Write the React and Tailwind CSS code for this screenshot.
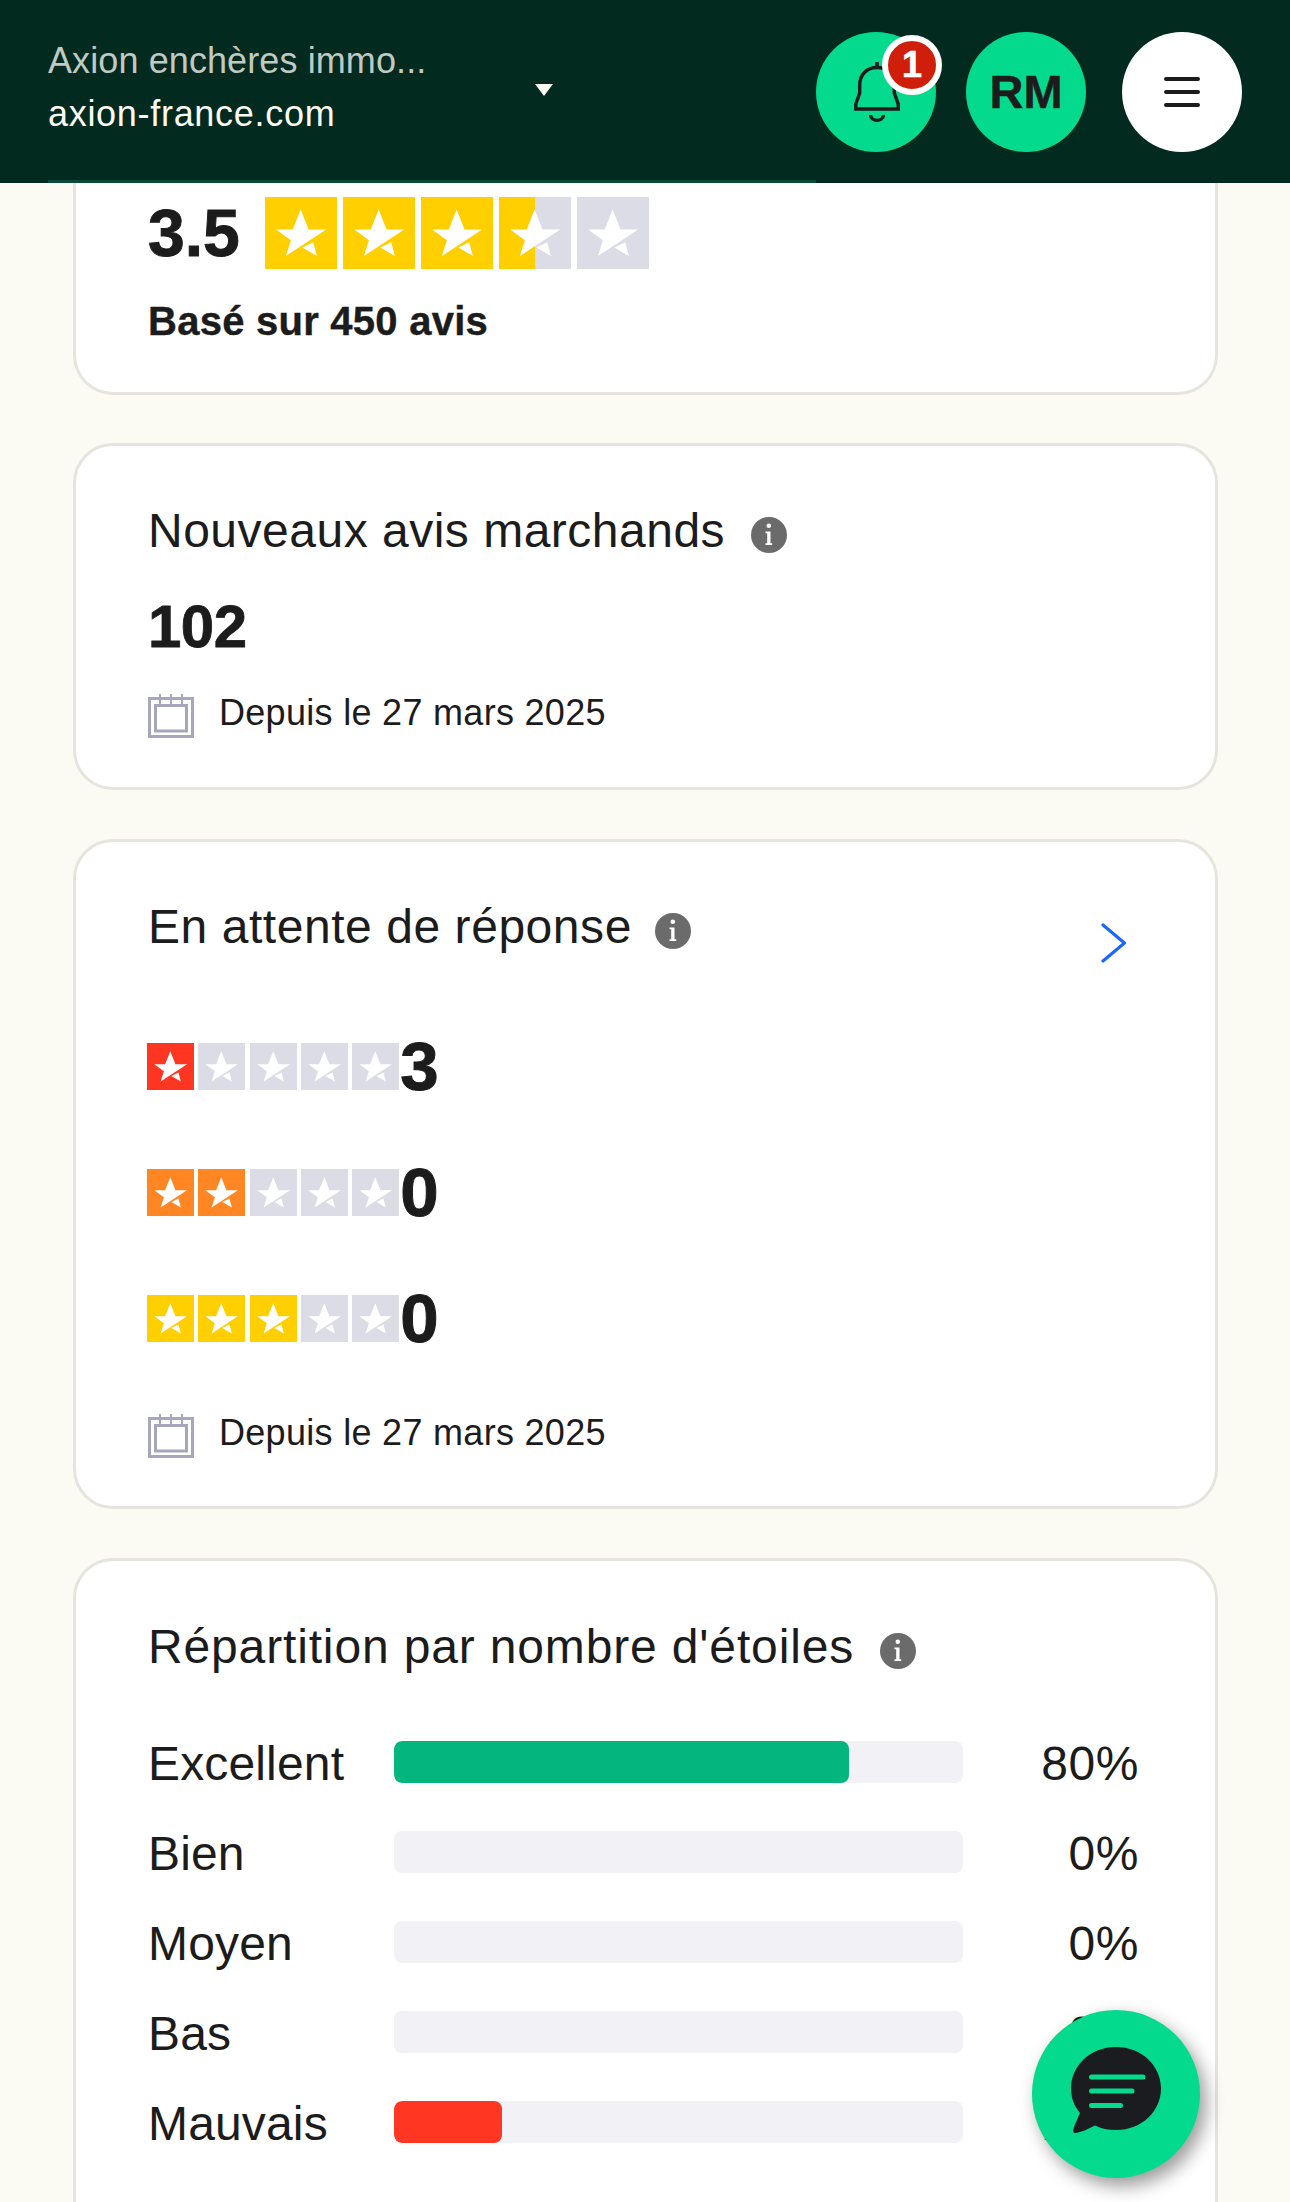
import React from "react";

function Star() {
  return (
    <svg viewBox="0 0 100 100" className="absolute inset-0 w-full h-full">
      <path fill="#fff" d="M49.500 17.500 L60.500 45 L85 45 L29 82 L36 60 L15.500 45 L38.500 45 Z" />
      <path fill="#fff" d="M67 63 L72 82 L52 70 Z" />
    </svg>
  );
}

function Tile({ color, size, half }) {
  return (
    <div className={`relative shrink-0 ${size}`} style={{ backgroundColor: half ? "#dcdce6" : color }}>
      {half && <div className="absolute left-0 top-0 h-full w-1/2" style={{ backgroundColor: color }} />}
      <Star />
    </div>
  );
}

function InfoIcon() {
  return (
    <svg width="36" height="36" viewBox="0 0 36 36" className="shrink-0 mt-[15px]">
      <circle cx="18" cy="18" r="18" fill="#6b6b6b" />
      <circle cx="17.800" cy="8.800" r="2.300" fill="#fff" />
      <path fill="#fff" d="M14.500 14.500h5v11.800h1.700v1.700h-6.700v-1.700h1.700v-10.100h-1.700z" />
    </svg>
  );
}

function Calendar() {
  return (
    <svg width="46" height="44" viewBox="0 0 46 44" fill="none" stroke="#a6a6bc" className="shrink-0">
      <rect x="1.500" y="4.500" width="43" height="38" strokeWidth="3" />
      <rect x="7.500" y="11.500" width="31" height="25.500" strokeWidth="3" />
      <path d="M12 0v11M23 0v11M34 0v11" strokeWidth="2" />
    </svg>
  );
}

function Since() {
  return (
    <div className="flex items-start gap-[25px]">
      <Calendar />
      <span className="pt-[1px] text-[36px] leading-[36px] tracking-[0.3px] text-[#1c1c1c]">Depuis le 27 mars 2025</span>
    </div>
  );
}

function Title({ children, tracking, gap }) {
  return (
    <div className={`flex items-start ${gap}`}>
      <h2 className={`pt-[1px] text-[48px] leading-[56px] font-normal text-[#1c1c1c] ${tracking}`}>{children}</h2>
      <InfoIcon />
    </div>
  );
}

function StarRow({ score, color, count }) {
  return (
    <div className="-ml-[1px] flex items-start">
      <div className="flex gap-[4.3px]">
        {[1, 2, 3, 4, 5].map((i) => (
          <Tile key={i} size="w-[47px] h-[47px]" color={i <= score ? color : "#dcdce6"} />
        ))}
      </div>
      <span className="ml-[1px] text-[69px] leading-[48px] font-bold text-[#1c1c1c] [-webkit-text-stroke:1px_#1c1c1c]">{count}</span>
    </div>
  );
}

function Bar({ label, pct, fill, value }) {
  return (
    <div className="flex h-[42px] items-start">
      <span className="w-[246px] pt-[1px] text-[48px] leading-[43px] tracking-[0.15px] text-[#1c1c1c]">{label}</span>
      <div className="relative h-[42px] w-[569px] overflow-hidden rounded-[8px] bg-[#f1f1f6]">
        {fill && <div className="h-full rounded-[8px]" style={{ width: pct, backgroundColor: fill }} />}
      </div>
      <span className="w-[176px] text-right text-[48px] leading-[45px] tracking-[0.6px] text-[#1c1c1c]">{value}</span>
    </div>
  );
}

const card = "ml-[73px] w-[1145px] border-[3px] border-[#e5e5dd] bg-white";

export default function App() {
  return (
    <div className="relative h-[2202px] w-[1290px] overflow-hidden bg-[#fcfbf3] [font-family:'Liberation_Sans',Arial,sans-serif]">
      <header className="flex h-[183px] items-start bg-[#022a1e]">
        <div className="ml-[48px] flex h-[183px] w-[768px] items-center border-b-[3px] border-[#0a4a38]">
          <div className="h-full w-[487px] pt-[34px]">
            <div className="text-[36px] leading-[53px] tracking-[0.1px] text-[#c0c9c2]">Axion enchères immo...</div>
            <div className="text-[36px] leading-[53px] tracking-[0.7px] text-[#fcfbf3]">axion-france.com</div>
          </div>
          <svg width="18" height="12" viewBox="0 0 18 12">
            <path d="M0 0H18L9 12Z" fill="#fcfbf3" />
          </svg>
        </div>
        <div className="relative mt-[32px] flex h-[120px] w-[120px] items-center justify-center rounded-full bg-[#04da8d]">
          <svg width="46" height="60" viewBox="0 0 46 60" fill="none" stroke="#1c1c1c" strokeWidth="3.500" className="ml-[1px]">
            <path d="M23 0v6" />
            <path d="M23 5.500C12.500 5.500 5.700 13 5.700 23V31L1.800 42V47H44.200V42L40.300 31V23C40.300 13 33.500 5.500 23 5.500Z" />
            <path d="M16.500 53C17 60 29 60 29.500 53" />
          </svg>
          <div className="absolute left-[66px] top-[3px] flex h-[60px] w-[60px] items-center justify-center rounded-full border-[6px] border-white bg-[#cf1f0a] text-[36px] font-bold leading-none text-white [-webkit-text-stroke:0.6px_#ffffff]">
            1
          </div>
        </div>
        <div className="ml-[30px] mt-[32px] flex h-[120px] w-[120px] items-center justify-center rounded-full bg-[#04da8d] text-[47px] font-bold text-[#1c1c1c] [-webkit-text-stroke:0.5px_#1c1c1c]">
          RM
        </div>
        <div className="ml-[36px] mt-[32px] flex h-[120px] w-[120px] flex-col items-center justify-center gap-[8.500px] rounded-full bg-white">
          <div className="h-[4.500px] w-[36px] rounded-full bg-[#1c1c1c]" />
          <div className="h-[4.500px] w-[36px] rounded-full bg-[#1c1c1c]" />
          <div className="h-[4.500px] w-[36px] rounded-full bg-[#1c1c1c]" />
        </div>
      </header>

      <section className={`${card} h-[212px] rounded-b-[40px] border-t-0 pl-[72px] pt-[14px]`}>
        <div className="flex items-start">
          <span className="w-[117px] text-[66px] font-bold leading-[72px] text-[#1c1c1c] [-webkit-text-stroke:1px_#1c1c1c]">3.5</span>
          <div className="flex gap-[6px]">
            <Tile size="w-[72px] h-[72px]" color="#ffcf00" />
            <Tile size="w-[72px] h-[72px]" color="#ffcf00" />
            <Tile size="w-[72px] h-[72px]" color="#ffcf00" />
            <Tile size="w-[72px] h-[72px]" color="#ffcf00" half />
            <Tile size="w-[72px] h-[72px]" color="#dcdce6" />
          </div>
        </div>
        <p className="mt-[28px] text-[40px] font-bold leading-[48px] tracking-[0.25px] text-[#1c1c1c] [-webkit-text-stroke:0.4px_#1c1c1c]">Basé sur 450 avis</p>
      </section>

      <section className={`${card} mt-[48px] h-[347px] rounded-[40px] pl-[72px] pt-[56px]`}>
        <Title tracking="tracking-[0.5px]" gap="gap-[26px]">Nouveaux avis marchands</Title>
        <p className="mt-[36px] text-[60px] font-bold leading-[64px] tracking-[-0.5px] text-[#1c1c1c] [-webkit-text-stroke:0.8px_#1c1c1c]">102</p>
        <div className="mt-[35px]">
          <Since />
        </div>
      </section>

      <section className={`${card} mt-[49px] h-[670px] rounded-[40px] pl-[72px] pt-[56px]`}>
        <div className="flex items-start justify-between pr-[89px]">
          <Title tracking="tracking-[0.55px]" gap="gap-[23px]">En attente de réponse</Title>
          <svg width="26" height="40" viewBox="0 0 26 40" fill="none" stroke="#1c66ff" strokeWidth="3.200" strokeLinecap="round" className="mt-[25px]">
            <path d="M3 2 L24.500 20 L3 38" />
          </svg>
        </div>
        <div className="mt-[80px] flex flex-col gap-[78px]">
          <StarRow score={1} color="#ff3722" count="3" />
          <StarRow score={2} color="#ff8622" count="0" />
          <StarRow score={3} color="#ffcf00" count="0" />
        </div>
        <div className="mt-[71px]">
          <Since />
        </div>
      </section>

      <section className={`${card} mt-[49px] h-[800px] rounded-[40px] pl-[72px] pt-[57px]`}>
        <Title tracking="tracking-[0.85px]" gap="gap-[26px]">Répartition par nombre d'étoiles</Title>
        <div className="mt-[66px] flex flex-col gap-[48px]">
          <Bar label="Excellent" pct="80%" fill="#04b67e" value="80%" />
          <Bar label="Bien" value="0%" />
          <Bar label="Moyen" value="0%" />
          <Bar label="Bas" value="0%" />
          <Bar label="Mauvais" pct="19%" fill="#ff3722" value="19%" />
        </div>
      </section>

      <button className="absolute left-[1032px] top-[2010px] h-[168px] w-[168px] rounded-full bg-[#04da8d] shadow-[6px_8px_18px_rgba(0,0,0,0.4)]">
        <svg width="168" height="168" viewBox="0 0 168 168">
          <path
            fill="#1b1c1f"
            d="M84 37C110 37 129 56 129 78.500C129 101 110 120 84 120C76 120 69 118.500 63 115.500C56 119 49 122.500 43 123C40.500 122.500 41 120 42 117C44 112 46 107 48 103C42 96 39 88 39 78.500C39 56 58 37 84 37Z"
          />
          <path
            stroke="#04da8d"
            strokeWidth="5"
            strokeLinecap="round"
            d="M59.500 67H111M59.500 81H100M59.500 95.500H88.500"
          />
        </svg>
      </button>
    </div>
  );
}
